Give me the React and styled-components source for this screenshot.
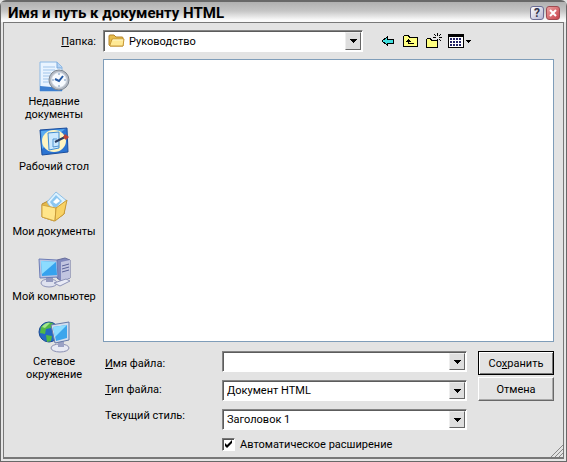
import React from 'react'
import styled, { createGlobalStyle } from 'styled-components'

const GlobalStyle = createGlobalStyle`
* {
  box-sizing: border-box;
}
body {
  margin: 0;
  background: #e3e3e3;
  font-family: Roboto, 'Liberation Sans', sans-serif;
  font-size: 11px;
  line-height: 13px;
  color: #000;
}
button, input, select {
  font: inherit;
  color: inherit;
}
`

const Window = styled.div`
  display: flex;
  flex-direction: column;
  min-height: 100vh;
  padding: 0 2px 2px;
  background: #e6e6e6;
  border: 1px solid #686868;
  border-top-width: 2px;
  border-radius: 6px 6px 0 0;
`

const TitleBar = styled.header`
  display: flex;
  align-items: center;
  gap: 2px;
  height: 20px;
  margin: 0 -2px;
  padding: 2px 6px 0 7px;
  background: linear-gradient(#b0b0b0, #c6c6c6 45%, #fafafa 90%);
`

const Title = styled.h1`
  flex: 1;
  margin: 0;
  font-size: 15px;
  line-height: 18px;
  font-weight: bold;
`

const CaptionButton = styled.button`
  display: flex;
  align-items: center;
  justify-content: center;
  width: 14px;
  height: 14px;
  padding: 0;
  border: 1px solid ${(p) => (p.$close ? '#a04a50' : '#6c6c94')};
  border-radius: 3px;
  background: ${(p) =>
    p.$close
      ? 'linear-gradient(135deg, #eba0a0, #c8434c)'
      : 'linear-gradient(135deg, #fff, #b4b4d2)'};
  color: ${(p) => (p.$close ? '#fff' : '#34344c')};
  font-size: 12px;
  font-weight: bold;
`

const Client = styled.main`
  flex: 1;
  display: grid;
  grid-template-columns: 99px 1fr;
  grid-template-rows: auto 1fr auto;
  border: 1px solid #787878;
  border-bottom-width: 2px;
  padding: 7px 9px 0 0;
  position: relative;
  background: #e3e3e3;
`

const FolderRow = styled.div`
  grid-column: 1 / -1;
  display: flex;
  align-items: center;
  height: 22px;
`

const FolderLabel = styled.label`
  width: 99px;
  padding-right: 7px;
  text-align: right;
`

const ComboBox = styled.div`
  position: relative;
  display: flex;
  align-items: center;
  width: ${(p) => (p.$wide ? '260px' : '245px')};
  height: ${(p) => (p.$wide ? '22px' : '21px')};
  background: #fff;
  border: 1px solid;
  border-color: #848484 #fff #fff #848484;
  box-shadow: inset 1px 1px #5c5c5c;
`

const Select = styled.select`
  appearance: none;
  width: 100%;
  height: 100%;
  margin: 0;
  padding: 0 20px 0 ${(p) => (p.$icon ? '25px' : '4px')};
  border: 0;
  background: transparent;
  outline: none;
`

const TextBox = styled.input`
  width: 100%;
  height: 100%;
  padding: 0 20px 0 4px;
  border: 0;
  background: transparent;
  outline: none;
`

const Drop = styled.span`
  position: absolute;
  right: 1px;
  top: 1px;
  bottom: 1px;
  width: 16px;
  display: flex;
  align-items: center;
  justify-content: center;
  background: #dedede;
  border: 1px solid;
  border-color: #eee #666 #666 #eee;
  pointer-events: none;
`

const ComboIcon = styled.span`
  position: absolute;
  left: 4px;
  top: 1px;
  display: flex;
  pointer-events: none;
`

const Tools = styled.div`
  display: flex;
  align-items: center;
  gap: 6px;
  padding-left: 17px;
`

const ToolButton = styled.button`
  display: flex;
  padding: 0;
  border: 0;
  background: none;
`

const Places = styled.nav`
  grid-row: 2 / 4;
  display: flex;
  flex-direction: column;
  padding: 8px 0 0 1px;
`

const Place = styled.a`
  display: flex;
  flex-direction: column;
  align-items: center;
  height: 65px;
  color: #000;
  text-align: center;
  text-decoration: none;
  svg {
    flex: none;
    margin-bottom: 1px;
  }
`

const FileList = styled.section`
  min-height: 283px;
  margin-top: 7px;
  background: #fff;
  border: 1px solid #7f9db9;
`

const Bottom = styled.div`
  display: flex;
  gap: 11px;
  padding: 9px 0 6px;
`

const Labels = styled.div`
  flex: 1;
  display: flex;
  flex-direction: column;
  gap: 13px;
  padding: 6px 0 0 2px;
`

const Controls = styled.div`
  display: flex;
  flex-direction: column;
  gap: 8px;
`

const CheckLabel = styled.label`
  display: flex;
  align-items: center;
  gap: 5px;
`

const Check = styled.input`
  appearance: none;
  width: 13px;
  height: 13px;
  margin: 0;
  border: 1px solid;
  border-color: #777 #fff #fff #777;
  background: #fff;
  box-shadow: inset 1px 1px #555;
  &:checked {
    background: #fff
      url("data:image/svg+xml,%3Csvg xmlns='http://www.w3.org/2000/svg' viewBox='0 0 11 11'%3E%3Cpath d='M2 4v3l2 2 5-5V1L4 6z'/%3E%3C/svg%3E");
  }
`

const Actions = styled.div`
  display: flex;
  flex-direction: column;
  gap: 2px;
`

const Button = styled.button`
  width: 76px;
  height: 24px;
  padding: 0;
  background: #e3e3e3;
  border: 1px solid;
  border-color: ${(p) => (p.$primary ? '#000' : '#fff #686868 #686868 #fff')};
  box-shadow: ${(p) =>
    p.$primary ? 'inset 1px 1px #fff, inset -1px -1px #777' : 'inset -1px -1px #aaa'};
`

const Grip = styled.svg`
  position: absolute;
  right: 0;
  bottom: 0;
`

function Arrow() {
  return (
    <svg width="7" height="4" shapeRendering="crispEdges">
      <path d="M0 0h7v1H6v1H5v1H4v1H3V3H2V2H1V1H0z" />
    </svg>
  )
}

function FolderIcon() {
  return (
    <svg width="17" height="17" viewBox="0 0 17 17">
      <path d="M1 13V4q0-1 1-1h4l2 2h6q1 0 1 1v8H2z" fill="#e8bd4c" stroke="#b5852b" />
      <path d="M2 13 4 7h12l-1 7H2z" fill="#ffe994" stroke="#c99a38" />
      <path d="M5 8h10" stroke="#fff7c8" />
    </svg>
  )
}

function RecentIcon() {
  return (
    <svg width="34" height="34" viewBox="0 0 34 34">
      <path d="M3 2h17l5 5v24H3z" fill="#e9f4ff" stroke="#8cb8e4" />
      <path d="M3 26v5h22v-3z" fill="#3d7fd0" />
      <path d="M20 2v6h5" fill="#b3d2f4" stroke="#7aa9da" />
      <path d="M6 7h12M6 10h12M6 13h8M6 16h7M6 19h6M6 22h6" stroke="#a1c5ea" />
      <circle cx="22" cy="20" r="10" fill="#b4bac4" stroke="#7d8792" />
      <circle cx="22" cy="20" r="7.500" fill="#f8fbff" stroke="#d5dce4" />
      <path d="M22 13v2M22 25v2M15 20h2M27 20h2" stroke="#7696ba" />
      <path d="m18 19 4 2 4-5" fill="none" stroke="#255aa4" strokeWidth="2" />
    </svg>
  )
}

function DesktopIcon() {
  return (
    <svg width="34" height="34" viewBox="0 0 34 34">
      <path d="m3 5 27-2 1 24-26 3z" fill="#2b74d2" stroke="#1b4e9d" />
      <path d="m4 6 24-2L5 24z" fill="#5aabf0" />
      <ellipse cx="17" cy="16" rx="12" ry="11" fill="#fff5c2" />
      <path d="m11 8 11-1v16l-10 2z" fill="#cbe9ff" stroke="#418dd3" />
      <path d="M20 14h-4v8l6-1" fill="none" stroke="#5194d0" />
      <path d="m18 17 10-5" stroke="#263b62" strokeWidth="2" />
      <path d="m28 9 4 3-3 3-3-3z" fill="#bb4437" />
    </svg>
  )
}

function DocumentsIcon() {
  return (
    <svg width="34" height="34" viewBox="0 0 34 34">
      <path d="m5 14 6-3 4 2 14-3-2 14-10 7-12-4z" fill="#e5b94a" stroke="#b8892e" />
      <path d="m19 2 11 9-12 13L10 12z" fill="#ddf2ff" stroke="#8fc0e6" />
      <path d="m19 5 6 6-7 8-5-7z" fill="#8cc6f0" />
      <path d="m16 12 4-4 3 3-4 3z" fill="#fff" />
      <path d="m5 15 14 3-1 13-13-4z" fill="#ffe58a" stroke="#d0a544" />
      <path d="m19 18 11-8-3 14-9 7z" fill="#f8d265" stroke="#c89a38" />
    </svg>
  )
}

function ComputerIcon() {
  return (
    <svg width="34" height="34" viewBox="0 0 34 34">
      <path d="m20 5 8-2 5 2v18l-9 3-4-3z" fill="#8088bc" stroke="#676d9b" />
      <path d="m24 7 9-2v18l-9 3z" fill="#c2c5e0" />
      <path d="m25 11 7-2M25 14l7-2M25 17l7-2" stroke="#5b639a" />
      <ellipse cx="12" cy="28" rx="8" ry="4" fill="#dfe2ef" stroke="#8e94b8" />
      <path d="M9 21h7v6H9z" fill="#9299bf" />
      <path d="m2 4 18 1 1 17-18 1z" fill="#b8c4e3" stroke="#6c7cb6" />
      <path d="m4 6 15 1 1 13-15 1z" fill="#36a2ee" />
      <path d="m4 6 15 1L5 19z" fill="#8cdcff" />
      <path d="m17 28 12-4 4 2-10 5z" fill="#e9ebf6" stroke="#8e94b8" />
    </svg>
  )
}

function NetworkIcon() {
  return (
    <svg width="34" height="34" viewBox="0 0 34 34">
      <circle cx="12" cy="12" r="10" fill="#2368c4" stroke="#1b4c94" />
      <path d="M4 7q5-6 12-4l-2 5-5 1-1 5-5-1zM9 15l6 1-1 5-4 1z" fill="#51b846" />
      <path d="M5 7q4-5 8-4L8 8z" fill="#a6e68c" />
      <ellipse cx="23" cy="28" rx="9" ry="4" fill="#e8eaf4" stroke="#898eb1" />
      <path d="m21 21 6-1v7h-6z" fill="#9aa1c4" />
      <path d="m14 5 18-3v18l-14 3z" fill="#d3dded" stroke="#667aa8" />
      <path d="m16 7 14-2v13l-11 3z" fill="#3ca5ec" />
      <path d="m16 7 14-2-12 12z" fill="#8eddff" />
    </svg>
  )
}

const places = [
  { icon: <RecentIcon />, lines: ['Недавние', 'документы'] },
  { icon: <DesktopIcon />, lines: ['Рабочий стол'] },
  { icon: <DocumentsIcon />, lines: ['Мои документы'] },
  { icon: <ComputerIcon />, lines: ['Мой компьютер'] },
  { icon: <NetworkIcon />, lines: ['Сетевое', 'окружение'] },
]

function App() {
  return (
    <>
      <GlobalStyle />
      <Window>
        <TitleBar>
          <Title>Имя и путь к документу HTML</Title>
          <CaptionButton>?</CaptionButton>
          <CaptionButton $close aria-label="Закрыть">
            <svg width="8" height="8">
              <path d="m1 1 6 6M7 1 1 7" stroke="#fff" strokeWidth="2" />
            </svg>
          </CaptionButton>
        </TitleBar>
        <Client>
          <FolderRow>
            <FolderLabel htmlFor="folder"><u>П</u>апка:</FolderLabel>
            <ComboBox $wide>
              <ComboIcon><FolderIcon /></ComboIcon>
              <Select id="folder" $icon><option>Руководство</option></Select>
              <Drop><Arrow /></Drop>
            </ComboBox>
            <Tools>
              <ToolButton aria-label="Назад">
                <svg width="16" height="16" shapeRendering="crispEdges">
                  <path d="m2 8 5-4v2h6v4H7v2z" fill="#41dfdf" stroke="#000" />
                </svg>
              </ToolButton>
              <ToolButton aria-label="Вверх">
                <svg width="17" height="16" shapeRendering="crispEdges">
                  <path d="M1.500 13.500v-10l1-1h4l1 2h8v9z" fill="#ffff80" stroke="#000" />
                  <path d="M6.500 6v4.500H12M4 8.500h5M5 7.500h3" fill="none" stroke="#000" />
                </svg>
              </ToolButton>
              <ToolButton aria-label="Новая папка">
                <svg width="17" height="16" shapeRendering="crispEdges">
                  <path d="M1.500 14.500v-8l1-1h3l1 2h6v7z" fill="#ffff80" stroke="#000" />
                  <path d="M12.500 0v3M12.500 6v3M8 4.500h3M14 4.500h3M9 1l2 2M16 1l-2 2M14 6l2 2" stroke="#000" />
                </svg>
              </ToolButton>
              <ToolButton aria-label="Вид">
                <svg width="24" height="16" shapeRendering="crispEdges">
                  <path d="M.5 1.500h15v13H.5z" fill="#fff" stroke="#000" />
                  <path d="M1 3h14" stroke="#000" strokeWidth="2" />
                  <path d="M2 6h12M2 9h12M2 12h12" stroke="#222266" strokeWidth="2" strokeDasharray="2 1" />
                  <path d="M18 7h5v1h-1v1h-1v1h-1V9h-1V8h-1z" />
                </svg>
              </ToolButton>
            </Tools>
          </FolderRow>
          <Places>
            {places.map((p) => (
              <Place href="#" key={p.lines[0]}>
                {p.icon}
                {p.lines.map((line) => <span key={line}>{line}</span>)}
              </Place>
            ))}
          </Places>
          <FileList />
          <Bottom>
            <Labels>
              <label htmlFor="name"><u>И</u>мя файла:</label>
              <label htmlFor="type"><u>Т</u>ип файла:</label>
              <label htmlFor="style">Текущий стиль:</label>
            </Labels>
            <Controls>
              <ComboBox><TextBox id="name" /><Drop><Arrow /></Drop></ComboBox>
              <ComboBox>
                <Select id="type"><option>Документ HTML</option></Select>
                <Drop><Arrow /></Drop>
              </ComboBox>
              <ComboBox>
                <Select id="style"><option>Заголовок 1</option></Select>
                <Drop><Arrow /></Drop>
              </ComboBox>
              <CheckLabel>
                <Check type="checkbox" defaultChecked />
                Автоматическое расширение
              </CheckLabel>
            </Controls>
            <Actions>
              <Button $primary>Со<u>х</u>ранить</Button>
              <Button>Отмена</Button>
            </Actions>
          </Bottom>
          <Grip width="13" height="13">
            <path d="M1 13 13 1M5 13l8-8M9 13l4-4" stroke="#888" />
          </Grip>
        </Client>
      </Window>
    </>
  )
}

export default App
